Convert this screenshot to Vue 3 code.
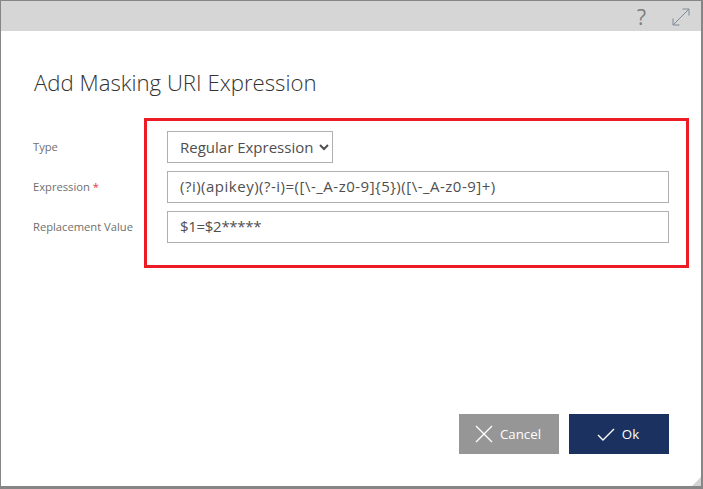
<script setup>
const expression = '(?i)(apikey)(?-i)=([\\-_A-z0-9]{5})([\\-_A-z0-9]+)'
const replacement = '$1=$2*****'
</script>

<template>
  <div class="dialog">
    <header class="topbar">
      <span class="help">?</span>
      <svg class="expand" width="18" height="18" viewBox="0 0 18 18" fill="none" stroke="#7f8a99" stroke-width="1">
        <path d="M1 17 L17 1" />
        <path d="M10.5 1 H17 V7.5" />
        <path d="M1 10.5 V17 H7.5" />
      </svg>
    </header>
    <main class="body">
      <h1 class="title">Add Masking URI Expression</h1>
      <form class="form" @submit.prevent>
        <label class="label">Type</label>
        <select class="control select">
          <option>Regular Expression</option>
        </select>
        <label class="label">Expression <span class="req">*</span></label>
        <input class="control expr" type="text" :value="expression" />
        <label class="label">Replacement Value</label>
        <input class="control repl" type="text" :value="replacement" />
      </form>
      <div class="highlight"></div>
      <footer class="actions">
        <button class="btn cancel" type="button">
          <svg width="18" height="18" viewBox="0 0 18 18" fill="none" stroke="#fff" stroke-width="1.3">
            <path d="M1 1 L17 17 M17 1 L1 17" />
          </svg>
          <span>Cancel</span>
        </button>
        <button class="btn ok" type="button">
          <svg width="18" height="13" viewBox="0 0 18 13" fill="none" stroke="#fff" stroke-width="1.4">
            <path d="M1 7 L6 12 L17 1" />
          </svg>
          <span>Ok</span>
        </button>
      </footer>
    </main>
    <svg class="grip" width="9" height="9" viewBox="0 0 9 9"><path d="M9 0 V9 H0 Z" fill="#d4d4d4" /></svg>
  </div>
</template>

<style>
html, body { margin: 0; background: #fff; }
</style>

<style scoped>
.dialog {
  position: relative;
  box-sizing: border-box;
  width: 703px;
  height: 489px;
  display: flex;
  flex-direction: column;
  background: #fff;
  border-style: solid;
  border-color: #868686;
  border-width: 1px 2px 3px 1px;
  font-family: "Open Sans", "Noto Sans", sans-serif;
  overflow: hidden;
}
.topbar {
  height: 30px;
  flex: none;
  background: #d6d6d6;
  display: flex;
  align-items: center;
  justify-content: flex-end;
  padding: 0 11px 0 0;
}
.help {
  font-size: 21px;
  color: #7d7d7d;
  margin: 1px 26px 0 0;
  line-height: 30px;
}
.expand { display: block; margin-top: 1px; }
.body {
  position: relative;
  flex: 1;
  display: flex;
  flex-direction: column;
  padding: 0 32px 32px 32px;
}
.title {
  margin: 36px 0 0 1px;
  font-size: 22.2px;
  line-height: 32px;
  font-weight: 300;
  color: #333;
}
.form {
  margin-top: 32px;
  display: grid;
  grid-template-columns: 134px 1fr;
  row-gap: 8px;
  align-items: center;
}
.label {
  font-size: 11.2px;
  color: #6f6f6f;
  position: relative;
  top: -1px;
}
.req { color: #e8344a; }
.control {
  box-sizing: border-box;
  height: 32px;
  width: 100%;
  margin: 0;
  border: 1px solid #b0b0b0;
  border-radius: 0;
  padding: 0 12px 2px;
  background: #fff;
  color: #4f4f4f;
  font-family: inherit;
  font-size: 15px;
  outline: none;
}
.expr { letter-spacing: 0.5px; }
.repl { letter-spacing: -0.3px; }
.select {
  width: 166px;
  padding: 0 0 0 8px;
}
.highlight {
  position: absolute;
  left: 143px;
  top: 87px;
  width: 545px;
  height: 150px;
  box-sizing: border-box;
  border: 3px solid #ed1c24;
  pointer-events: none;
}
.actions {
  margin-top: auto;
  display: flex;
  justify-content: flex-end;
  gap: 10px;
}
.btn {
  width: 100px;
  height: 40px;
  border: 0;
  padding: 0 2px 0 0;
  color: #fff;
  font-family: inherit;
  font-size: 13.3px;
  display: flex;
  align-items: center;
  justify-content: center;
  gap: 7px;
}
.cancel { background: #969696; }
.ok { background: #1b3160; }
.grip {
  position: absolute;
  right: 0;
  bottom: 0;
}
</style>
